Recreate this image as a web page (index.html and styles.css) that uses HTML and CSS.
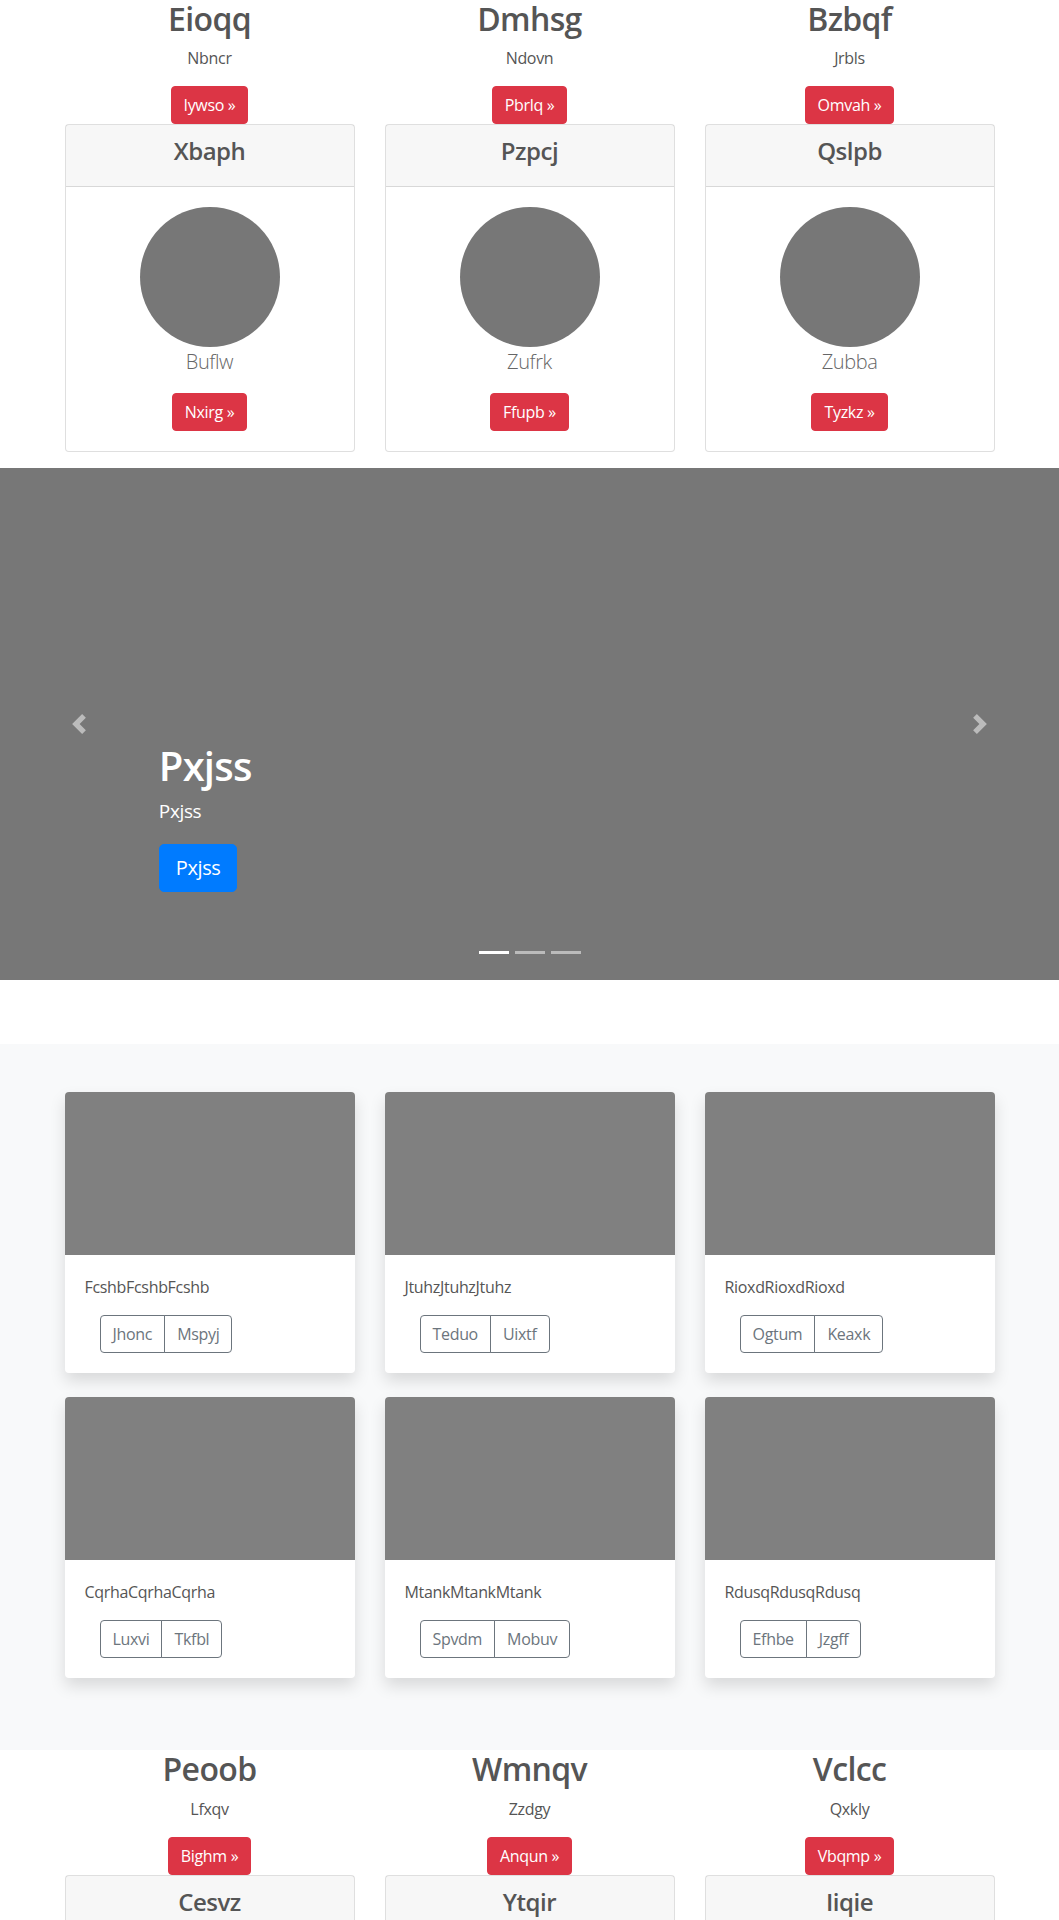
FILE: index.html
```html
<!DOCTYPE html>
<html lang="en">
<head>
<meta charset="utf-8">
<title>Page</title>
<link rel="stylesheet" href="styles.css">
</head>
<body>

<section class="marketing">
  <div class="container">
    <div class="row">
      <div class="col">
        <h2 class="feature-title">Eioqq</h2>
        <p class="feature-text">Nbncr</p>
        <p class="feature-action"><a class="btn btn-danger" href="#">Iywso &raquo;</a></p>
        <div class="card profile-card">
          <div class="card-header"><h4 class="card-heading">Xbaph</h4></div>
          <div class="card-body">
            <div class="avatar"></div>
            <p class="lead">Buflw</p>
            <a class="btn btn-danger" href="#">Nxirg &raquo;</a>
          </div>
        </div>
      </div>
      <div class="col">
        <h2 class="feature-title">Dmhsg</h2>
        <p class="feature-text">Ndovn</p>
        <p class="feature-action"><a class="btn btn-danger" href="#">Pbrlq &raquo;</a></p>
        <div class="card profile-card">
          <div class="card-header"><h4 class="card-heading">Pzpcj</h4></div>
          <div class="card-body">
            <div class="avatar"></div>
            <p class="lead">Zufrk</p>
            <a class="btn btn-danger" href="#">Ffupb &raquo;</a>
          </div>
        </div>
      </div>
      <div class="col">
        <h2 class="feature-title">Bzbqf</h2>
        <p class="feature-text">Jrbls</p>
        <p class="feature-action"><a class="btn btn-danger" href="#">Omvah &raquo;</a></p>
        <div class="card profile-card">
          <div class="card-header"><h4 class="card-heading">Qslpb</h4></div>
          <div class="card-body">
            <div class="avatar"></div>
            <p class="lead">Zubba</p>
            <a class="btn btn-danger" href="#">Tyzkz &raquo;</a>
          </div>
        </div>
      </div>
    </div>
  </div>
</section>

<section class="carousel">
  <div class="carousel-item">
    <div class="carousel-caption">
      <h1 class="caption-title">Pxjss</h1>
      <p class="caption-text">Pxjss</p>
      <p class="caption-action"><a class="btn btn-lg btn-primary" href="#">Pxjss</a></p>
    </div>
  </div>
  <a class="carousel-control control-prev" href="#">
    <svg class="control-icon" viewBox="0 0 8 8" width="20" height="20"><path d="M5.25 0l-4 4 4 4 1.5-1.5-2.5-2.5 2.5-2.5-1.5-1.5z"/></svg>
  </a>
  <a class="carousel-control control-next" href="#">
    <svg class="control-icon" viewBox="0 0 8 8" width="20" height="20"><path d="M2.75 0l-1.5 1.5 2.5 2.5-2.5 2.5 1.5 1.5 4-4-4-4z"/></svg>
  </a>
  <ol class="carousel-indicators">
    <li class="active"></li>
    <li></li>
    <li></li>
  </ol>
</section>

<section class="album">
  <div class="container">
    <div class="album-grid">
      <div class="album-card">
        <div class="album-thumb"></div>
        <div class="album-body">
          <p class="album-text">FcshbFcshbFcshb</p>
          <div class="btn-group">
            <button class="btn btn-outline" type="button">Jhonc</button><button class="btn btn-outline" type="button">Mspyj</button>
          </div>
        </div>
      </div>
      <div class="album-card">
        <div class="album-thumb"></div>
        <div class="album-body">
          <p class="album-text">JtuhzJtuhzJtuhz</p>
          <div class="btn-group">
            <button class="btn btn-outline" type="button">Teduo</button><button class="btn btn-outline" type="button">Uixtf</button>
          </div>
        </div>
      </div>
      <div class="album-card">
        <div class="album-thumb"></div>
        <div class="album-body">
          <p class="album-text">RioxdRioxdRioxd</p>
          <div class="btn-group">
            <button class="btn btn-outline" type="button">Ogtum</button><button class="btn btn-outline" type="button">Keaxk</button>
          </div>
        </div>
      </div>
      <div class="album-card">
        <div class="album-thumb"></div>
        <div class="album-body">
          <p class="album-text">CqrhaCqrhaCqrha</p>
          <div class="btn-group">
            <button class="btn btn-outline" type="button">Luxvi</button><button class="btn btn-outline" type="button">Tkfbl</button>
          </div>
        </div>
      </div>
      <div class="album-card">
        <div class="album-thumb"></div>
        <div class="album-body">
          <p class="album-text">MtankMtankMtank</p>
          <div class="btn-group">
            <button class="btn btn-outline" type="button">Spvdm</button><button class="btn btn-outline" type="button">Mobuv</button>
          </div>
        </div>
      </div>
      <div class="album-card">
        <div class="album-thumb"></div>
        <div class="album-body">
          <p class="album-text">RdusqRdusqRdusq</p>
          <div class="btn-group">
            <button class="btn btn-outline" type="button">Efhbe</button><button class="btn btn-outline" type="button">Jzgff</button>
          </div>
        </div>
      </div>
    </div>
  </div>
</section>

<section class="marketing">
  <div class="container">
    <div class="row">
      <div class="col">
        <h2 class="feature-title">Peoob</h2>
        <p class="feature-text">Lfxqv</p>
        <p class="feature-action"><a class="btn btn-danger" href="#">Bighm &raquo;</a></p>
        <div class="card profile-card">
          <div class="card-header"><h4 class="card-heading">Cesvz</h4></div>
          <div class="card-body">
            <div class="avatar"></div>
            <p class="lead">Kwnpo</p>
            <a class="btn btn-danger" href="#">Hrtbe &raquo;</a>
          </div>
        </div>
      </div>
      <div class="col">
        <h2 class="feature-title">Wmnqv</h2>
        <p class="feature-text">Zzdgy</p>
        <p class="feature-action"><a class="btn btn-danger" href="#">Anqun &raquo;</a></p>
        <div class="card profile-card">
          <div class="card-header"><h4 class="card-heading">Ytqir</h4></div>
          <div class="card-body">
            <div class="avatar"></div>
            <p class="lead">Dqmsl</p>
            <a class="btn btn-danger" href="#">Gofvy &raquo;</a>
          </div>
        </div>
      </div>
      <div class="col">
        <h2 class="feature-title">Vclcc</h2>
        <p class="feature-text">Qxkly</p>
        <p class="feature-action"><a class="btn btn-danger" href="#">Vbqmp &raquo;</a></p>
        <div class="card profile-card">
          <div class="card-header"><h4 class="card-heading">Iiqie</h4></div>
          <div class="card-body">
            <div class="avatar"></div>
            <p class="lead">Ujxar</p>
            <a class="btn btn-danger" href="#">Ntkew &raquo;</a>
          </div>
        </div>
      </div>
    </div>
  </div>
</section>

</body>
</html>
```

FILE: styles.css
```css
* {
  box-sizing: border-box;
}

html, body {
  margin: 0;
  padding: 0;
}

body {
  font-family: "Open Sans", "Noto Sans", "DejaVu Sans", sans-serif;
  font-size: 16px;
  line-height: 1.5;
  color: #555;
  background: #fff;
}

h1, h2, h4, p {
  margin: 0;
}

a {
  text-decoration: none;
}

.container {
  width: 960px;
  margin: 0 auto;
  padding: 0 15px;
}

/* ---------- marketing blocks ---------- */

.row {
  display: grid;
  grid-template-columns: repeat(3, 1fr);
  column-gap: 30px;
}

.col {
  text-align: center;
}

.feature-title {
  font-size: 32px;
  font-weight: 600;
  line-height: 1.2;
  margin-bottom: 8px;
  letter-spacing: -0.02em;
}

.feature-text {
  margin-bottom: 16px;
  letter-spacing: -0.02em;
}

.btn {
  display: inline-block;
  font-family: inherit;
  font-size: 16px;
  line-height: 24px;
  padding: 6px 12px;
  border: 1px solid transparent;
  border-radius: 4px;
  font-weight: 400;
  text-align: center;
  vertical-align: middle;
  cursor: pointer;
  letter-spacing: -0.02em;
}

.btn-danger {
  background: #dc3545;
  border-color: #dc3545;
  color: #fff;
}

.btn-primary {
  background: #007bff;
  border-color: #007bff;
  color: #fff;
}

.btn-lg {
  font-size: 20px;
  line-height: 30px;
  padding: 8px 16px;
  border-radius: 5px;
}

.card {
  background: #fff;
  border: 1px solid rgba(0, 0, 0, 0.125);
  border-radius: 4px;
  text-align: center;
}

.profile-card {
  margin-bottom: 16px;
}

.card-header {
  background: rgba(0, 0, 0, 0.03);
  border-bottom: 1px solid rgba(0, 0, 0, 0.125);
  padding: 12px 20px;
}

.card-heading {
  font-size: 24px;
  font-weight: 600;
  line-height: 1.2;
  margin-bottom: 8px;
  letter-spacing: -0.02em;
}

.card-body {
  padding: 20px;
}

.avatar {
  width: 140px;
  height: 140px;
  border-radius: 50%;
  background: #777;
  margin: 0 auto;
}

.lead {
  font-size: 20px;
  font-weight: 300;
  line-height: 30px;
  margin-bottom: 16px;
  color: #666;
  letter-spacing: -0.02em;
}

/* ---------- carousel ---------- */

.carousel {
  position: relative;
  height: 512px;
  background: #777;
  margin-bottom: 64px;
}

.carousel-item {
  height: 100%;
}

.carousel-caption {
  position: absolute;
  left: 15%;
  right: 15%;
  bottom: 52px;
  padding: 20px 0;
  color: #fff;
  text-align: left;
}

.caption-title {
  font-size: 40px;
  font-weight: 600;
  line-height: 1.2;
  margin-bottom: 6px;
  letter-spacing: -0.02em;
}

.caption-text {
  font-size: 19px;
  line-height: 30px;
  margin-bottom: 18px;
  letter-spacing: -0.02em;
}

.caption-action {
  margin-bottom: 16px;
}

.carousel-control {
  position: absolute;
  top: 0;
  bottom: 0;
  width: 15%;
  display: flex;
  align-items: center;
  justify-content: center;
}

.control-prev {
  left: 0;
}

.control-next {
  right: 0;
}

.control-icon {
  display: block;
  fill: #fff;
  opacity: 0.5;
}

.carousel-indicators {
  position: absolute;
  left: 0;
  right: 0;
  bottom: 0;
  margin: 0 0 16px;
  padding: 0;
  list-style: none;
  display: flex;
  justify-content: center;
}

.carousel-indicators li {
  width: 30px;
  height: 3px;
  margin: 0 3px;
  box-sizing: content-box;
  border-top: 10px solid transparent;
  border-bottom: 10px solid transparent;
  background: #fff;
  background-clip: padding-box;
  opacity: 0.5;
}

.carousel-indicators li.active {
  opacity: 1;
}

/* ---------- album ---------- */

.album {
  background: #f8f9fa;
  padding: 48px 0;
}

.album-grid {
  display: grid;
  grid-template-columns: repeat(3, 1fr);
  column-gap: 30px;
  row-gap: 24px;
  padding-bottom: 24px;
}

.album-card {
  background: #fff;
  border-radius: 4px;
  overflow: hidden;
  box-shadow: 0 8px 16px rgba(0, 0, 0, 0.13);
}

.album-thumb {
  height: 163px;
  background: #808080;
}

.album-body {
  padding: 20px;
}

.album-text {
  margin-bottom: 16px;
  line-height: 24px;
  letter-spacing: -0.02em;
}

.btn-group {
  display: inline-flex;
  margin-left: 15px;
}

.btn-outline {
  background: transparent;
  color: #6c757d;
  border-color: #6c757d;
}

.btn-group .btn-outline:first-child {
  border-top-right-radius: 0;
  border-bottom-right-radius: 0;
}

.btn-group .btn-outline:last-child {
  margin-left: -1px;
  border-top-left-radius: 0;
  border-bottom-left-radius: 0;
}
```
